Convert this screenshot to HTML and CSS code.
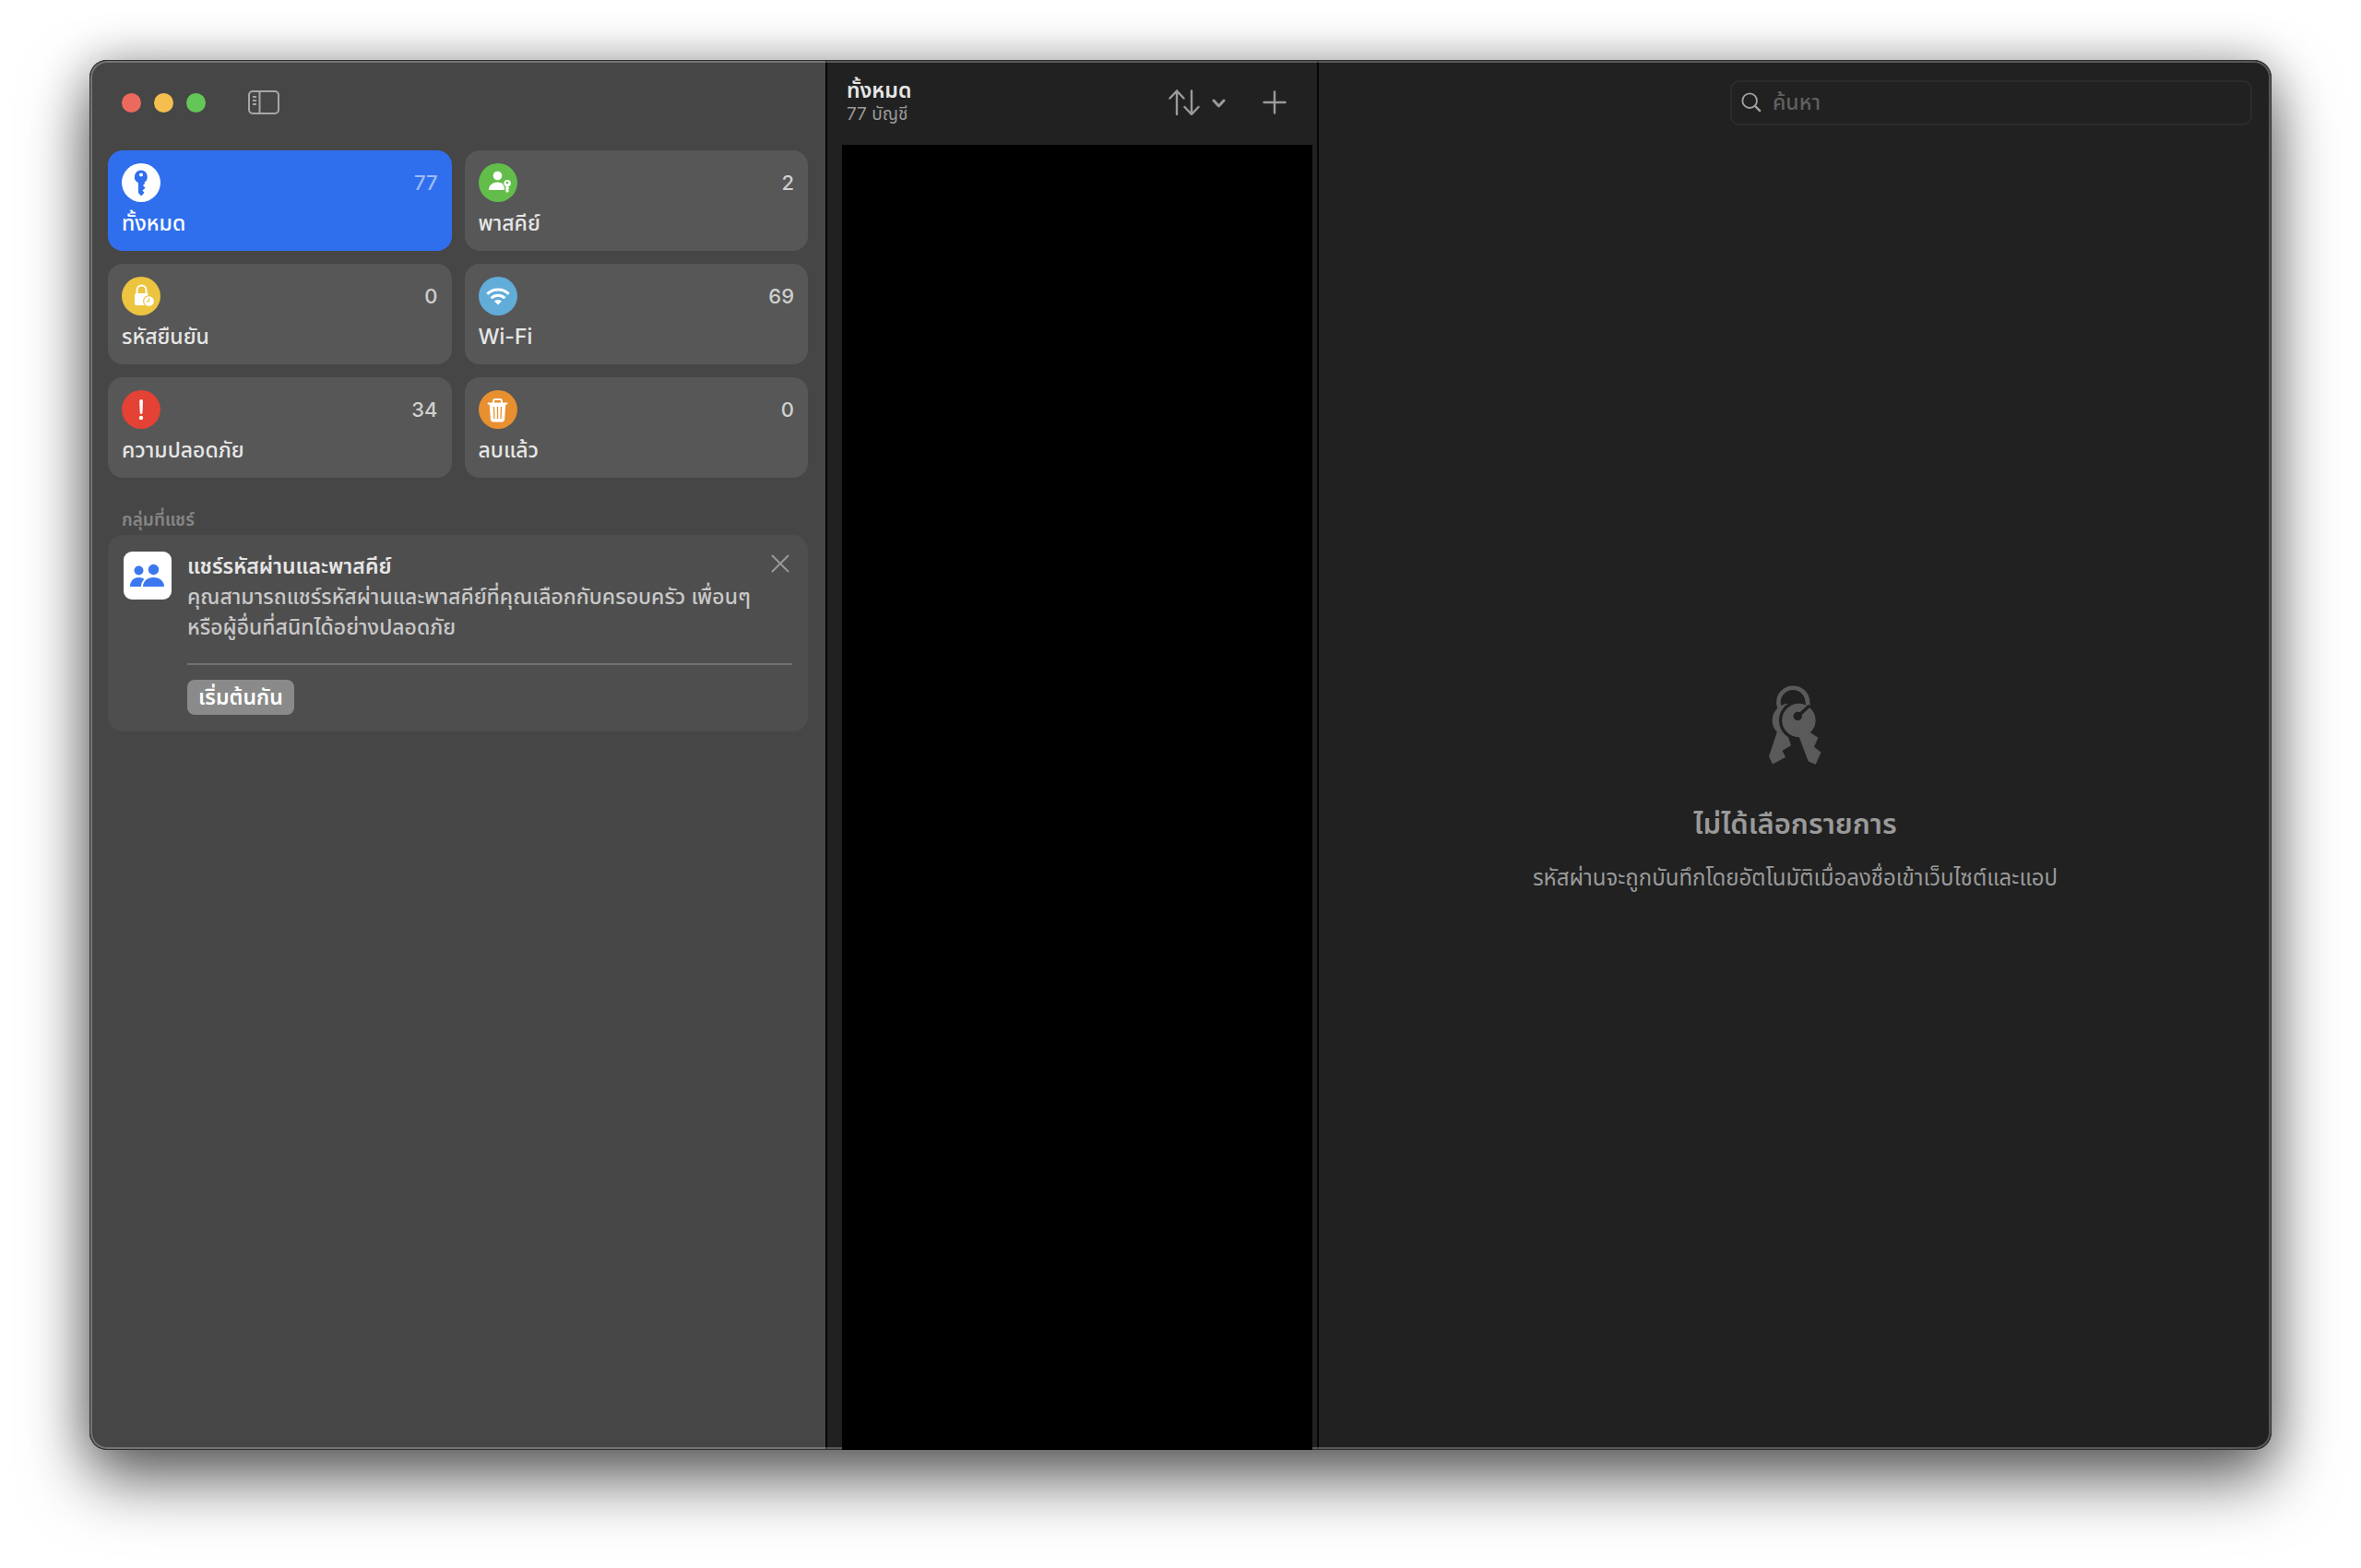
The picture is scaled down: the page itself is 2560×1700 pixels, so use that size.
FILE: index.html
```html
<!DOCTYPE html>
<html lang="th">
<head>
  <meta charset="UTF-8">
  <title>รหัสผ่าน</title>
  <meta name="viewport" content="width=device-width,initial-scale=1">
  <link rel="stylesheet" href="styles.css">
</head>
<body>
  <main class="window">
    <!-- Sidebar -->
    <aside class="sidebar">
      <div class="toolbar sidebar-toolbar">
        <div class="lights">
          <button class="light close" aria-label="ปิด"></button>
          <button class="light minimize" aria-label="ย่อ"></button>
          <button class="light zoom" aria-label="ขยาย"></button>
        </div>
        <button class="icon-btn" aria-label="แถบข้าง">
          <svg width="34" height="26" viewBox="0 0 34 26" fill="none" stroke="#a6a6a6" stroke-width="2">
            <rect x="1" y="1" width="32" height="24" rx="4"/>
            <path d="M12.500 1v24M5 7h4M5 11h4M5 15h4"/>
          </svg>
        </button>
      </div>

      <nav class="cards">
        <button class="card active">
          <span class="card-top">
            <svg class="badge" viewBox="0 0 42 42">
              <circle cx="21" cy="21" r="21" fill="#fff"/>
              <path fill="#2f6fed" fill-rule="evenodd" d="M21 7.500a7.200 7.200 0 0 0-3 13.700V32l3 3.500 3.500-3.500-2-2.500 3-2.800-2.500-2.700 2.500-2.500-1.300-.6A7.200 7.200 0 0 0 21 7.500zM21 10.500a2 2 0 1 1 0 4 2 2 0 0 1 0-4z"/>
            </svg>
            <span class="count">77</span>
          </span>
          <span class="card-name">ทั้งหมด</span>
        </button>
        <button class="card">
          <span class="card-top">
            <svg class="badge" viewBox="0 0 42 42">
              <circle cx="21" cy="21" r="21" fill="#63bd4b"/>
              <circle cx="20.500" cy="13.500" r="4.800" fill="#fff"/>
              <path fill="#fff" d="M11 29c0-5 4-8.500 9.500-8.500S29 24 29 29z"/>
              <path fill="#63bd4b" d="M26 22a5 5 0 0 1 10 0v4h-3.500v5h-4.500v-5z"/>
              <path fill="#fff" fill-rule="evenodd" d="M31 18a3.700 3.700 0 0 0-1.600 7v5.500l1.600 1.500 2-2-1.200-1.300 1.500-1.500-1.300-1.400.9-.8A3.700 3.700 0 0 0 31 18zM31 19.800a1.300 1.300 0 1 1 0 2.600 1.300 1.300 0 0 1 0-2.600z"/>
            </svg>
            <span class="count">2</span>
          </span>
          <span class="card-name">พาสคีย์</span>
        </button>
        <button class="card">
          <span class="card-top">
            <svg class="badge" viewBox="0 0 42 42">
              <circle cx="21" cy="21" r="21" fill="#ecc440"/>
              <rect x="14" y="18" width="15" height="13" rx="2" fill="#fff"/>
              <path fill="none" stroke="#fff" stroke-width="2" d="M16.500 18v-3.500a5 5 0 0 1 10 0V18"/>
              <circle cx="29.500" cy="26.500" r="6.500" fill="#ecc440"/>
              <circle cx="29.500" cy="26.500" r="5.300" fill="#fff"/>
              <path fill="none" stroke="#ecc440" stroke-width="1.200" d="M29.500 23v4h-3"/>
            </svg>
            <span class="count">0</span>
          </span>
          <span class="card-name">รหัสยืนยัน</span>
        </button>
        <button class="card">
          <span class="card-top">
            <svg class="badge" viewBox="0 0 42 42">
              <circle cx="21" cy="21" r="21" fill="#62acd9"/>
              <g fill="none" stroke="#fff" stroke-width="3">
                <path d="M9.300 18.800a16.600 16.600 0 0 1 23.400 0"/>
                <path d="M13.600 23.300a10.500 10.500 0 0 1 14.800 0"/>
              </g>
              <path fill="#fff" d="M21 30.500l-4-4a5.800 5.800 0 0 1 8 0z"/>
            </svg>
            <span class="count">69</span>
          </span>
          <span class="card-name">Wi-Fi</span>
        </button>
        <button class="card">
          <span class="card-top">
            <svg class="badge" viewBox="0 0 42 42">
              <circle cx="21" cy="21" r="21" fill="#e34234"/>
              <path fill="#fff" d="M19.200 12a1.900 1.900 0 0 1 3.800 0l-.5 12.500a1.400 1.400 0 0 1-2.800 0z"/>
              <circle cx="21" cy="30" r="2.200" fill="#fff"/>
            </svg>
            <span class="count">34</span>
          </span>
          <span class="card-name">ความปลอดภัย</span>
        </button>
        <button class="card">
          <span class="card-top">
            <svg class="badge" viewBox="0 0 42 42">
              <circle cx="21" cy="21" r="21" fill="#e88f30"/>
              <path fill="none" stroke="#fff" stroke-width="2" stroke-linecap="round" d="M10.500 14.500h20M16 14v-2a2 2 0 0 1 2-2h5a2 2 0 0 1 2 2v2"/>
              <path fill="#fff" d="M11.700 15h17.600l-1.200 17a2.600 2.600 0 0 1-2.600 2.400h-10a2.600 2.600 0 0 1-2.600-2.400z"/>
              <path stroke="#e88f30" stroke-width="1.300" d="M16.500 18l.5 13M20.500 18v13M24.500 18l-.5 13"/>
            </svg>
            <span class="count">0</span>
          </span>
          <span class="card-name">ลบแล้ว</span>
        </button>
      </nav>

      <h2 class="section-title">กลุ่มที่แชร์</h2>
      <section class="share">
        <svg class="share-icon" viewBox="0 0 52 52">
          <rect width="52" height="52" rx="9" fill="#fff"/>
          <g fill="#3b78f0">
            <circle cx="16.500" cy="20.500" r="5"/>
            <path d="M7 38c0-6 4-10 9.500-10 2.500 0 4.500.7 6 2-2.200 2-3.500 4.600-3.500 8z"/>
            <circle cx="32.500" cy="19.500" r="5.700"/>
            <path d="M21 38c0-6 5-10 11.500-10S44 32 44 38z"/>
          </g>
        </svg>
        <div class="share-body">
          <h3>แชร์รหัสผ่านและพาสคีย์</h3>
          <p>คุณสามารถแชร์รหัสผ่านและพาสคีย์ที่คุณเลือกกับครอบครัว เพื่อนๆ<br>หรือผู้อื่นที่สนิทได้อย่างปลอดภัย</p>
          <div class="share-actions">
            <button class="start-btn">เริ่มต้นกัน</button>
          </div>
        </div>
        <button class="icon-btn dismiss" aria-label="ปิดคำแนะนำ">
          <svg width="20" height="20" viewBox="0 0 20 20" fill="none" stroke="#989898" stroke-width="2" stroke-linecap="round">
            <path d="M1.500 1.500l17 17M18.500 1.500l-17 17"/>
          </svg>
        </button>
      </section>
    </aside>

    <!-- Account list -->
    <section class="list">
      <header class="toolbar list-toolbar">
        <div class="list-title">
          <h1>ทั้งหมด</h1>
          <p>77 บัญชี</p>
        </div>
        <button class="icon-btn sort" aria-label="เรียงตาม">
          <svg width="62" height="28" viewBox="0 0 62 28" fill="none" stroke="#9a9a9a" stroke-width="2.400" stroke-linecap="round" stroke-linejoin="round">
            <path d="M9 27V1.500M1.500 9.500l7.500-8 7.500 8M25 1.500V27M17.500 19l7.500 8 7.500-8"/>
            <path stroke-width="3" d="M49 12l5.500 6 5.500-6"/>
          </svg>
        </button>
        <button class="icon-btn" aria-label="เพิ่ม">
          <svg width="26" height="26" viewBox="0 0 26 26" fill="none" stroke="#9a9a9a" stroke-width="2.400" stroke-linecap="round">
            <path d="M13 1.500v23M1.500 13h23"/>
          </svg>
        </button>
      </header>
      <div class="list-items"></div>
    </section>

    <!-- Detail -->
    <section class="detail">
      <header class="toolbar detail-toolbar">
        <label class="search">
          <svg width="22" height="22" viewBox="0 0 24 24" fill="none" stroke="#a0a0a0" stroke-width="2" stroke-linecap="round">
            <circle cx="10" cy="10" r="8.500"/>
            <path stroke-width="2.600" d="M16.500 16.500l5.500 5.500"/>
          </svg>
          <input type="search" placeholder="ค้นหา" aria-label="ค้นหา">
        </label>
      </header>
      <div class="empty">
        <svg width="57" height="86" viewBox="0 0 57 86">
          <circle cx="26.200" cy="18.500" r="15.800" fill="none" stroke="#5a5a5a" stroke-width="4.600"/>
          <circle cx="21.800" cy="38" r="18.200" fill="#5a5a5a"/>
          <path fill="#5a5a5a" d="M9 50L0 77l4 8.500 14-7.500-3.400-7.300L24 65.300 20 53z"/>
          <circle cx="32.400" cy="38" r="21.500" fill="#212121"/>
          <path fill="none" stroke="#5a5a5a" stroke-width="4.600" d="M36 6c4 3 6.500 8 6.200 17"/>
          <circle cx="32.400" cy="38" r="18.200" fill="#5a5a5a"/>
          <path fill="#5a5a5a" d="M32 54l10.700 28.500 8 3.200 5.800-13-7.500-6 4.400-10L43 50z"/>
          <circle cx="31.200" cy="33.500" r="4.700" fill="#212121"/>
          <path stroke="#212121" stroke-width="3.600" d="M32 33L44 22"/>
        </svg>
        <h2>ไม่ได้เลือกรายการ</h2>
        <p>รหัสผ่านจะถูกบันทึกโดยอัตโนมัติเมื่อลงชื่อเข้าเว็บไซต์และแอป</p>
      </div>
    </section>
  </main>
</body>
</html>
```
FILE: styles.css
```css
* { box-sizing: border-box; margin: 0; padding: 0; }
body { display: flex; min-height: 100vh; padding: 65px 97px 128px; background: #fff; color: #e6e6e6;
  font-family: Inter, "Noto Sans Thai", "Noto Sans", sans-serif; font-size: 23px; line-height: 33px; }
button { font: inherit; color: inherit; background: none; border: none; cursor: pointer; }
svg { display: block; flex: none; }

.window { flex: 1; display: grid; grid-template-columns: 800fr 533fr 1033fr; border-radius: 19px; overflow: hidden;
  position: relative; background: #212121; box-shadow: 0 32px 70px rgba(0,0,0,.6), 0 0 50px rgba(0,0,0,.25); }
/* light rim drawn over the panes */
.window::after { content: ""; position: absolute; inset: 0; border-radius: inherit; pointer-events: none;
  border: 1px solid #2f302f; box-shadow: inset 0 0 0 2px rgba(255,255,255,.25); }

.toolbar { display: flex; align-items: center; height: 92px; }
.icon-btn { display: flex; }

/* Sidebar */
.sidebar { background: #464646; border-right: 2px solid #050505; padding: 0 19px 0 20px; }
.sidebar-toolbar { gap: 46px; padding: 0 15px 6px; height: 98px; }
.lights { display: flex; gap: 14px; }
.light { width: 21px; height: 21px; border-radius: 50%; }
.close { background: #ec695e; }
.minimize { background: #f5bf4f; }
.zoom { background: #65c658; }

.cards { display: grid; grid-template-columns: 1fr 1fr; gap: 14px; }
.card { height: 109px; padding: 14px 15px 0; border-radius: 16px; background: #575757; text-align: left;
  display: flex; flex-direction: column; justify-content: flex-start; gap: 7px; font-weight: 500; }
.card-top { display: flex; justify-content: space-between; align-items: center; width: 100%; }
.badge { width: 42px; height: 42px; }
.count { color: #cfcfcf; font-size: 22px; }
.active { background: #2f6fed; color: #fff; }
.active .count { color: #9dbcf7; }

.section-title { margin: 29px 15px 0; font-size: 19px; line-height: 33px; font-weight: 600; color: #868686; }
.share { display: flex; gap: 17px; position: relative; padding: 18px 17px; border-radius: 16px; background: #4e4e4e; }
.share-icon { width: 52px; height: 52px; }
.share-body { flex: 1; }
.share h3 { font-size: 23px; font-weight: 600; }
.share p { color: #c8c8c8; font-weight: 500; }
.share-actions { margin-top: 22px; padding-top: 16px; border-top: 2px solid #717171; }
.start-btn { display: block; height: 38px; padding: 0 12px; border-radius: 8px; background: #8a8a8a; color: #fff; font-weight: 600; }
.dismiss { position: absolute; top: 21px; right: 20px; }

/* List */
.list { display: flex; flex-direction: column; border-right: 2px solid #050505; }
.list-toolbar { padding: 0 33px 0 21px; gap: 40px; }
.list-title { flex: 1; }
.list-title h1 { font-size: 23px; line-height: 26px; font-weight: 600; }
.list-title p { font-size: 19px; line-height: 26px; color: #9a9a9a; }
.list-items { flex: 1; margin: 0 5px 0 16px; background: #000; position: relative; z-index: 1; }

/* Detail */
.detail { display: flex; flex-direction: column; }
.detail-toolbar { justify-content: flex-end; padding-right: 21px; }
.search { display: flex; align-items: center; gap: 12px; width: 566px; height: 49px; padding: 0 10px;
  border: 2px solid #2b2b2b; border-radius: 10px; }
.search input { flex: 1; min-width: 0; border: none; outline: none; background: none; color: #e6e6e6; font: inherit; font-weight: 500; }
.search input::placeholder { color: #606060; }
.empty { flex: 1; display: flex; flex-direction: column; align-items: center; justify-content: center; padding-bottom: 18px; text-align: center; color: #9a9a9a; }
.empty h2 { margin-top: 40px; font-size: 31px; line-height: 48px; font-weight: 600; }
.empty p { margin-top: 18px; font-size: 24px; }
```
